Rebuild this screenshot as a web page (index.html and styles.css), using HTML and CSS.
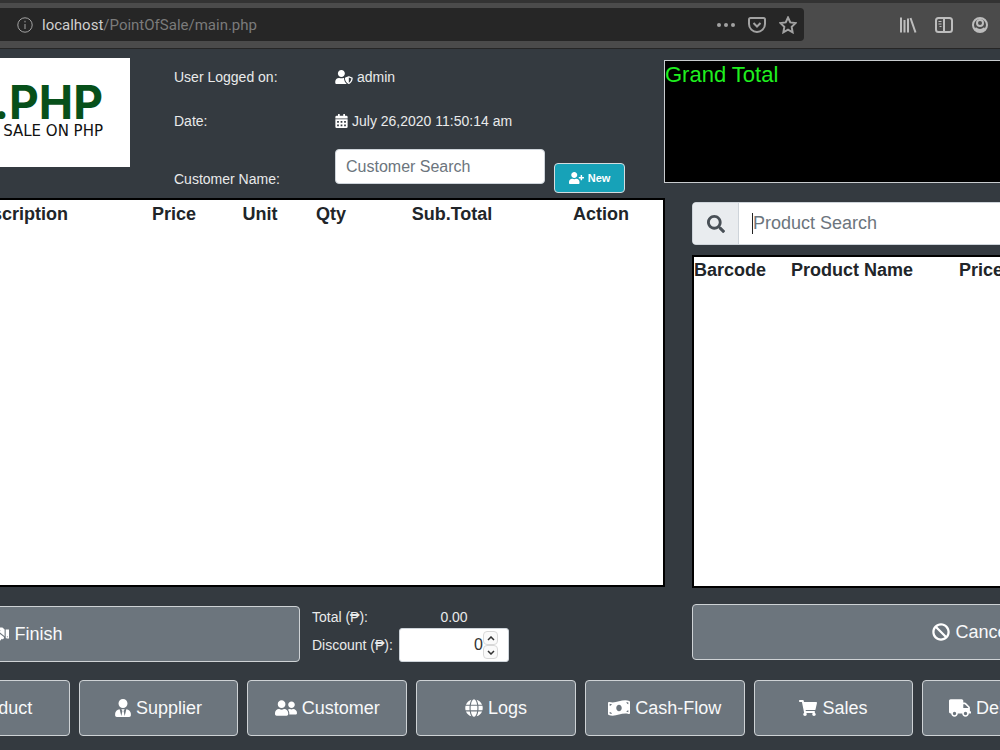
FILE: index.html
```html
<!doctype html>
<html lang="en">
<head>
    <meta charset="UTF-8">
    <meta name="viewport" content="width=device-width, initial-scale=1.0">
    <title>Point of Sale</title>
    <link rel="stylesheet" href="styles.css">
</head>
<body>

<div class="browser">
    <div class="urlbar">
        <svg class="tool" viewBox="0 0 18 18"><circle cx="9" cy="9" r="7.2"/><path d="M9 8v5M9 4.8v1.6"/></svg>
        <div class="url"><b>localhost</b>/PointOfSale/main.php</div>
        <svg class="tool dots" viewBox="0 0 18 18"><circle cx="2" cy="9" r="2"/><circle cx="9" cy="9" r="2"/><circle cx="16" cy="9" r="2"/></svg>
        <svg class="tool" viewBox="0 0 18 18"><path d="M2.5 2h13Q17 2 17 3.500V8a8 8 0 0 1-16 0V3.500Q1 2 2.500 2z"/><path d="M5.500 7L9 10.500 12.500 7"/></svg>
        <svg class="tool" viewBox="0 0 18 18"><path d="M9 1.500l2.300 4.900 5.200.7-3.800 3.700.9 5.500L9 13.700l-4.600 2.600.9-5.500L1.500 7.100l5.200-.7z"/></svg>
    </div>
    <div class="tools">
        <svg class="tool" viewBox="0 0 18 18"><path d="M2 1.500v15M5.500 4v12.500M9 2.500v14M11.500 2l5 14.500"/></svg>
        <svg class="tool" viewBox="0 0 18 18"><rect x="1" y="2" width="16" height="14" rx="2.500"/><path d="M9 2v14"/><path stroke-width="1" d="M3.500 5.500h3M3.500 8h3M4.500 10.500h2"/></svg>
        <svg class="tool" viewBox="0 0 18 18"><circle cx="9" cy="9" r="7"/><circle cx="9" cy="7" r="3"/><path stroke-width="3" d="M4 12.500q5 4 10 0"/></svg>
    </div>
</div>

<div class="page">
    <div class="main">
        <div class="left">
            <div class="header">
                <div class="logo">
                    <strong>POS.PHP</strong>
                    <span>POINT OF SALE ON PHP</span>
                </div>
                <div class="info">
                    <span>User Logged on:</span>
                    <span>
                        <svg class="icon wide" viewBox="0 0 640 512"><path d="M622.3 271.1l-115.2-45c-4.100-1.600-12.600-3.700-22.200 0l-115.200 45c-10.700 4.200-17.700 14-17.700 24.900 0 111.600 68.700 188.800 132.900 213.900 9.600 3.700 18 1.600 22.200 0C558.400 489.900 640 420.500 640 296c0-10.900-7-20.700-17.700-24.900zM496 462.400V273.300l95.500 37.300c-5.600 87.100-60.900 135.400-95.500 151.800zM224 256c70.700 0 128-57.300 128-128S294.700 0 224 0 96 57.300 96 128s57.300 128 128 128zm96 40c0-2.500.8-4.800 1.100-7.200-2.500-.1-4.900-.8-7.500-.8h-16.700c-22.200 10.200-46.900 16-72.900 16s-50.600-5.800-72.900-16h-16.700C60.200 288 0 348.200 0 422.400V464c0 26.500 21.500 48 48 48h352c6.800 0 13.300-1.500 19.200-4-54-42.900-99.200-116.700-99.200-212z"/></svg>
                        admin
                    </span>
                    <span>Date:</span>
                    <span>
                        <svg class="icon narrow" viewBox="0 0 448 512"><path fill-rule="evenodd" d="M0 464q0 48 48 48h352q48 0 48-48V192H0zM64 256h64v64H64zm128 0h64v64h-64zm128 0h64v64h-64zM64 384h64v64H64zm128 0h64v64h-64zm128 0h64v64h-64zM448 160v-48q0-48-48-48h-48V12q0-12-12-12h-40q-12 0-12 12v52H160V12q0-12-12-12h-40Q96 0 96 12v52H48Q0 64 0 112v48z"/></svg>
                        July 26,2020 11:50:14 am
                    </span>
                    <label for="customer">Customer Name:</label>
                    <div class="customer">
                        <input type="text" id="customer" placeholder="Customer Search">
                        <button class="new">
                            <svg class="icon wide" viewBox="0 0 640 512"><path d="M624 208h-64v-64c0-8.800-7.200-16-16-16h-32c-8.800 0-16 7.200-16 16v64h-64c-8.800 0-16 7.200-16 16v32c0 8.800 7.200 16 16 16h64v64c0 8.800 7.200 16 16 16h32c8.800 0 16-7.200 16-16v-64h64c8.800 0 16-7.200 16-16v-32c0-8.800-7.200-16-16-16zm-400 48c70.700 0 128-57.300 128-128S294.700 0 224 0 96 57.300 96 128s57.300 128 128 128zm89.600 32h-16.700c-22.200 10.200-46.900 16-72.900 16s-50.600-5.800-72.900-16h-16.700C60.200 288 0 348.200 0 422.400V464c0 26.500 21.500 48 48 48h352c26.500 0 48-21.500 48-48v-41.600c0-74.200-60.200-134.400-134.400-134.400z"/></svg>
                            New
                        </button>
                    </div>
                </div>
            </div>

            <div class="panel cart">
                <table>
                    <tr>
                        <th>Description</th>
                        <th class="price">Price</th>
                        <th class="unit">Unit</th>
                        <th class="qty">Qty</th>
                        <th class="sub">Sub.Total</th>
                        <th class="action">Action</th>
                    </tr>
                </table>
            </div>

            <div class="checkout">
                <button class="btn finish">
                    <svg class="icon wide" viewBox="0 0 640 512"><path d="M434.700 64h-85.900c-8 0-15.700 3-21.600 8.400l-98.300 90c-.1.1-.2.3-.3.4-16.600 15.600-16.300 40.500-2.100 56 12.700 13.900 39.400 17.600 56.100 2.700.1-.1.3-.1.4-.2l79.900-73.200c6.500-5.900 16.700-5.500 22.600 1 6 6.500 5.500 16.600-1 22.600l-26.100 23.900L504 313.800c2.900 2.400 5.500 5 7.900 7.700V128l-54.600-54.600c-5.900-6-14.100-9.400-22.600-9.400zM544 128.200v223.900c0 17.700 14.300 32 32 32h64V128.200h-96zm48 223.900c-8.800 0-16-7.200-16-16s7.200-16 16-16 16 7.200 16 16-7.200 16-16 16zM0 384h64c17.700 0 32-14.300 32-32V128.200H0V384zm48-63.900c8.800 0 16 7.200 16 16s-7.200 16-16 16-16-7.200-16-16c0-8.900 7.200-16 16-16zm435.900 18.600L334.600 217.500l-30 27.500c-29.700 27.100-75.200 24.500-101.700-4.400-26.900-29.400-24.800-74.900 4.400-101.700L289.100 64h-83.800c-8.500 0-16.600 3.400-22.600 9.400L128 128v223.900h18.300l90.500 81.900c27.400 22.300 67.700 18.100 90-9.300l.2-.2 17.900 15.500c15.900 13 39.400 10.500 52.300-5.400l31.400-38.600 5.400 4.400c13.700 11.100 33.900 9.100 45-4.700l9.500-11.700c11.200-13.800 9.100-33.900-4.600-45.100z"/></svg>
                    Finish
                </button>
                <div class="totals">
                    <span>Total (₱):</span>
                    <span class="amount">0.00</span>
                    <label for="discount">Discount (₱):</label>
                    <div class="discount">
                        <input type="text" inputmode="decimal" id="discount" value="0">
                        <div class="spin">
                            <button aria-label="Increase"><svg viewBox="0 0 8 5"><path d="M1 4l3-3 3 3"/></svg></button>
                            <button aria-label="Decrease"><svg viewBox="0 0 8 5"><path d="M1 1l3 3 3-3"/></svg></button>
                        </div>
                    </div>
                </div>
            </div>
        </div>

        <div class="right">
            <div class="grand">Grand Total</div>
            <div class="products">
                <div class="search">
                    <label for="product" aria-label="Product Search">
                        <svg class="icon" viewBox="0 0 512 512"><path d="M505 442.700L405.300 343c-4.500-4.500-10.600-7-17-7H372c27.600-35.300 44-79.700 44-128C416 93.100 322.900 0 208 0S0 93.100 0 208s93.100 208 208 208c48.300 0 92.700-16.400 128-44v16.300c0 6.400 2.500 12.500 7 17l99.700 99.700c9.400 9.400 24.600 9.400 33.900 0l28.300-28.300c9.400-9.400 9.400-24.600.1-34zM208 336c-70.700 0-128-57.200-128-128 0-70.700 57.200-128 128-128 70.700 0 128 57.200 128 128 0 70.700-57.200 128-128 128z"/></svg>
                    </label>
                    <div class="field">
                        <i class="caret"></i>
                        <input type="text" id="product" placeholder="Product Search">
                    </div>
                </div>
                <div class="panel list">
                    <table>
                        <tr>
                            <th class="barcode">Barcode</th>
                            <th class="name">Product Name</th>
                            <th class="cost">Price</th>
                            <th></th>
                        </tr>
                    </table>
                </div>
                <button class="btn">
                    <svg class="icon" viewBox="0 0 512 512"><path d="M256 8C119 8 8 119 8 256s111 248 248 248 248-111 248-248S393 8 256 8zm130.100 117.900c65.400 65.400 70 165.500 20.700 235.600L150.500 105.200c70.200-49.300 170.200-44.700 235.600 20.700zM125.900 386.100c-65.400-65.400-70-165.500-20.700-235.600l256.300 256.300c-70.200 49.300-170.200 44.700-235.600-20.700z"/></svg>
                    Cancel
                </button>
            </div>
        </div>
    </div>

    <nav class="menu">
        <button class="btn">
            <svg class="icon" viewBox="0 0 512 512"><path d="M240 0v160H8L52 32Q64 0 96 0zM272 0h144q32 0 44 32l44 128H272zM0 192h512v272q0 48-48 48H48q-48 0-48-48z"/></svg>
            Product
        </button>
        <button class="btn">
            <svg class="icon narrow" viewBox="0 0 448 512"><path d="M224 256c70.700 0 128-57.300 128-128S294.700 0 224 0 96 57.300 96 128s57.300 128 128 128zm95.800 32.600L272 480l-32-136 32-56h-96l32 56-32 136-47.800-191.400C56.900 292 0 350.300 0 422.400V464c0 26.500 21.500 48 48 48h352c26.500 0 48-21.500 48-48v-41.600c0-72.100-56.900-130.400-128.200-133.800z"/></svg>
            Supplier
        </button>
        <button class="btn">
            <svg class="icon wide" viewBox="0 0 640 512"><path d="M192 256c61.900 0 112-50.100 112-112S253.900 32 192 32 80 82.100 80 144s50.100 112 112 112zm76.800 32h-8.300c-20.800 10-43.900 16-68.500 16s-47.600-6-68.500-16h-8.300C51.600 288 0 339.600 0 403.200V432c0 26.500 21.500 48 48 48h288c26.500 0 48-21.500 48-48v-28.800c0-63.600-51.600-115.200-115.200-115.200zM480 256c53 0 96-43 96-96s-43-96-96-96-96 43-96 96 43 96 96 96zm48 32h-3.800c-13.900 4.800-28.600 8-44.200 8s-30.300-3.200-44.200-8H432c-20.400 0-39.200 5.900-55.700 15.400 24.400 26.300 39.700 61.200 39.700 99.800v38.400c0 2.200-.5 4.300-.6 6.400H592c26.500 0 48-21.500 48-48 0-61.900-50.100-112-112-112z"/></svg>
            Customer
        </button>
        <button class="btn">
            <svg class="icon" viewBox="0 0 496 512"><path d="M336.500 160C322 70.700 287.800 8 248 8s-74 62.700-88.500 152h177zM152 256c0 22.200 1.200 43.500 3.300 64h185.300c2.100-20.500 3.300-41.800 3.300-64s-1.200-43.500-3.300-64H155.300c-2.100 20.500-3.300 41.800-3.300 64zm324.700-96c-28.600-67.900-86.500-120.400-158-141.600 24.400 33.800 41.200 84.700 50 141.600h108zM177.200 18.400C105.800 39.600 47.800 92.100 19.300 160h108c8.700-56.900 25.500-107.800 49.900-141.600zM487.400 192H372.700c2.100 21 3.300 42.500 3.300 64s-1.200 43-3.300 64h114.600c5.500-20.500 8.600-41.800 8.600-64s-3.100-43.500-8.500-64zM120 256c0-21.500 1.200-43 3.300-64H8.600C3.200 212.500 0 233.800 0 256s3.200 43.500 8.600 64h114.600c-2-21-3.200-42.500-3.200-64zm39.500 96c14.500 89.300 48.700 152 88.500 152s74-62.700 88.500-152h-177zm159.300 141.600c71.400-21.200 129.400-73.700 158-141.600h-108c-8.800 56.900-25.600 107.800-50 141.600zM19.300 352c28.600 67.900 86.500 120.400 158 141.600-24.400-33.800-41.200-84.700-50-141.600h-108z"/></svg>
            Logs
        </button>
        <button class="btn">
            <svg class="icon wide" viewBox="0 0 640 512"><path d="M621.200 54.500C582.400 38.200 543.600 32 504.800 32c-123.200 0-246.400 62.300-369.500 62.300-30.900 0-61.800-3.900-92.700-13.700-3.500-1.100-6.900-1.600-10.300-1.600C15 79 0 92.300 0 110.800v317.300c0 12.600 7.200 24.600 18.800 29.400C57.600 473.800 96.400 480 135.200 480c123.200 0 246.400-62.300 369.600-62.300 30.900 0 61.700 3.900 92.600 13.700 3.500 1.100 7 1.600 10.400 1.600 17.200 0 32.200-13.300 32.200-31.800V83.900c0-12.600-7.200-24.600-18.800-29.400zM48 132.200c20.100 5 41.100 7.600 62.700 8.900C104.800 170.500 79 192.700 48 192.700v-60.500zm0 285v-47.800c34.400 0 62.200 27.300 63.700 61.400-22.500-1.800-43.600-6.300-63.700-13.600zM320 352c-44.200 0-80-43-80-96s35.800-96 80-96 80 43 80 96-35.800 96-80 96zm272 27.800c-17.500-4.400-35.700-6.900-54.300-8.500 5.900-26 27.500-45.800 54.300-49.200v57.700zm0-236.100c-30.900-3.900-54.900-29.700-55.800-61.600 19.500 2.200 38.100 6.300 55.800 12.700v48.900z"/></svg>
            Cash-Flow
        </button>
        <button class="btn">
            <svg class="icon" viewBox="0 0 576 512"><path d="M528.100 301.300l47.300-208C578.800 78.300 567.400 64 552 64H159.200L150 19.200C147.800 8 137.900 0 126.500 0H24C10.700 0 0 10.700 0 24v16c0 13.300 10.700 24 24 24h69.900l70.200 343.400C147.300 417.100 136 435.200 136 456c0 30.900 25.100 56 56 56s56-25.100 56-56c0-15.700-6.400-29.800-16.800-40h209.600C430.400 426.200 424 440.300 424 456c0 30.900 25.100 56 56 56s56-25.100 56-56c0-22.200-12.900-41.300-31.600-50.400l5.500-24.300c3.400-15-8-29.300-23.400-29.300H218.100l-6.500-32h293.100c11.200 0 20.900-7.800 23.400-18.700z"/></svg>
            Sales
        </button>
        <button class="btn">
            <svg class="icon wide" viewBox="0 0 640 512"><path d="M624 352h-16V243.900c0-12.700-5.100-24.900-14.100-33.900L494 110.100c-9-9-21.200-14.100-33.900-14.100H416V48c0-26.500-21.500-48-48-48H48C21.500 0 0 21.500 0 48v320c0 26.500 21.500 48 48 48h16c0 53 43 96 96 96s96-43 96-96h128c0 53 43 96 96 96s96-43 96-96h48c8.800 0 16-7.200 16-16v-32c0-8.800-7.200-16-16-16zM160 464c-26.500 0-48-21.500-48-48s21.500-48 48-48 48 21.500 48 48-21.500 48-48 48zm320 0c-26.500 0-48-21.500-48-48s21.500-48 48-48 48 21.500 48 48-21.500 48-48 48zm80-208H416V144h44.100l99.900 99.900V256z"/></svg>
            Deliveries
        </button>
    </nav>
</div>

</body>
</html>
```
FILE: styles.css
```css
*{
    box-sizing: border-box;
}
body{
    margin: 0;
    min-height: 100vh;
    display: flex;
    flex-direction: column;
    overflow-x: hidden;
    background-color: #343a40;
    color: #e9eaeb;
    font: 14px/20px "Liberation Sans", Arial, sans-serif;
}
button, input{
    font-family: inherit;
    margin: 0;
}
button{
    cursor: pointer;
}

/* browser bar */
.browser{
    display: flex;
    align-items: center;
    height: 49px;
    padding-bottom: 2px;
    border-top: 3px solid #333;
    border-bottom: 1px solid #262626;
    background-color: #4b4b4b;
}
.urlbar{
    flex: 0 1 804px;
    display: flex;
    align-items: center;
    gap: 13px;
    height: 33px;
    padding: 0 7px 0 16px;
    border-radius: 0 4px 4px 0;
    background-color: #262626;
}
.url{
    flex: 1;
    margin-left: -5px;
    color: #7b7b7b;
    font: 15px/20px Roboto, sans-serif;
}
.url b{
    color: #cfcfcf;
    font-weight: normal;
}
.tool{
    width: 18px;
    height: 18px;
    fill: none;
    stroke: #a2a2a2;
    stroke-width: 2;
}
.urlbar .tool:first-child{
    stroke-width: 1;
}
.urlbar .dots{
    fill: #a2a2a2;
    stroke: none;
}
.tools{
    flex: 1;
    display: flex;
    justify-content: flex-end;
    gap: 18px;
    padding-right: 11px;
}
.tools .tool{
    stroke: #bdbdbd;
}

/* page */
.page{
    flex: 1;
    display: flex;
    flex-direction: column;
    gap: 18px;
    padding-bottom: 14px;
    overflow: hidden;
}
.main{
    flex: 1;
    display: grid;
    grid-template-columns: minmax(0, 133fr) minmax(0, 67fr);
}
.left, .right, .products{
    display: flex;
    flex-direction: column;
}
.icon{
    width: 18px;
    height: 18px;
    fill: #fff;
    flex: none;
}
.icon.wide{
    width: 22px;
}
.icon.narrow{
    width: 16px;
}

/* header */
.header{
    display: flex;
    gap: 44px;
    height: 149px;
    padding-top: 9px;
}
.logo{
    width: 130px;
    height: 109px;
    padding: 22px 27px 0 0;
    display: flex;
    flex-direction: column;
    align-items: flex-end;
    overflow: hidden;
    white-space: nowrap;
    background-color: #fff;
    color: #111;
    font: 15px/14px "DejaVu Sans", sans-serif;
}
.logo strong{
    color: #07501a;
    font: bold 46px/44px Inter, sans-serif;
}
.info{
    display: grid;
    grid-template-columns: 161px auto;
    grid-template-rows: 38px 50px 47px;
    align-items: center;
    align-content: start;
}
.info span{
    display: flex;
    align-items: center;
    gap: 4px;
}
.info .icon{
    height: 14px;
    width: 18px;
}
.info .icon.narrow{
    width: 13px;
}
.info label{
    align-self: end;
    margin-bottom: 4px;
}
.customer{
    display: flex;
    align-items: flex-end;
    align-self: end;
    gap: 9px;
}
.customer input{
    width: 210px;
    height: 35px;
    margin-bottom: 9px;
    padding: 0 10px;
    border: 1px solid #ced4da;
    border-radius: 4px;
    font-size: 16px;
}
input::placeholder{
    color: #6c757d;
    opacity: 1;
}
.new{
    display: flex;
    align-items: center;
    justify-content: center;
    gap: 4px;
    width: 71px;
    height: 30px;
    padding: 0;
    border: 1px solid #d5dcdf;
    border-radius: 4px;
    background-color: #17a2b8;
    color: #fff;
    font-size: 11px;
    font-weight: bold;
}
.info .new .icon{
    width: 15px;
    height: 12px;
}

/* tables */
.panel{
    flex: 1;
    min-height: 200px;
    border: 2px solid #000;
    background-color: #fff;
    color: #212529;
}
.panel table{
    width: 100%;
    table-layout: fixed;
    border-collapse: collapse;
}
.panel th{
    padding: 0;
    font-size: 18px;
    line-height: 28px;
}
.list th{
    line-height: 26px;
}
/* the cart runs past the left edge of the window */
.cart{
    margin-left: -90px;
}
.price{
    width: 98px;
}
.unit{
    width: 74px;
}
.qty{
    width: 68px;
}
.sub{
    width: 174px;
}
.action{
    width: 124px;
}
.barcode{
    width: 72px;
}
.name{
    width: 172px;
}
.cost{
    width: 86px;
}

/* buttons */
.btn{
    display: flex;
    align-items: center;
    justify-content: center;
    gap: 5px;
    height: 56px;
    padding: 0;
    border: 1px solid #ced2d5;
    border-radius: 4px;
    background-color: #6c757d;
    color: #f8f9fa;
    font-size: 18px;
}
.checkout{
    display: flex;
    gap: 12px;
    margin-top: 19px;
    margin-left: -250px;
}
.finish{
    width: 550px;
}
.totals{
    display: grid;
    grid-template-columns: 87px 110px;
    grid-template-rows: 22px 34px;
    align-items: center;
    white-space: nowrap;
}
.amount{
    text-align: center;
}
.discount{
    display: flex;
    align-items: center;
    height: 34px;
    padding-right: 10px;
    border: 1px solid #ced4da;
    border-radius: 3px;
    background-color: #fff;
}
.discount input{
    flex: 1;
    min-width: 0;
    padding: 0;
    border: 0;
    outline: none;
    background: none;
    color: #333;
    font-size: 16px;
    text-align: right;
}
.spin{
    display: flex;
    flex-direction: column;
}
.spin button{
    display: flex;
    align-items: center;
    justify-content: center;
    width: 15px;
    height: 14px;
    padding: 0;
    border: 1px solid #d8d8d8;
    border-radius: 4px;
    background-color: #fafafa;
}
.spin svg{
    width: 8px;
    height: 5px;
    fill: none;
    stroke: #333;
    stroke-width: 1.5;
}

/* right side */
.grand{
    height: 123px;
    margin: 11px -252px 19px -1px;
    padding-top: 2px;
    border: 1px solid #c8cbce;
    background-color: #000;
    color: #1ff01f;
    font-size: 22px;
    line-height: 24px;
}
.products{
    flex: 1;
    margin: 0 -252px 2px 27px;
}
.search{
    display: flex;
    height: 43px;
    margin-bottom: 10px;
    border: 1px solid #ced4da;
    border-radius: 4px;
    background-color: #fff;
    overflow: hidden;
}
.search label{
    display: flex;
    align-items: center;
    justify-content: center;
    width: 46px;
    border-right: 1px solid #ced4da;
    background-color: #e9ecef;
}
.search .icon{
    fill: #495057;
}
.field{
    flex: 1;
    display: flex;
    align-items: center;
    padding-left: 13px;
}
.caret{
    width: 1px;
    height: 21px;
    background-color: #222;
}
.field input{
    flex: 1;
    padding: 0;
    border: 0;
    outline: none;
    font-size: 18px;
}
.list{
    margin-bottom: 16px;
}

/* bottom menu */
.menu{
    display: grid;
    grid-template-columns: repeat(7, 1fr);
    gap: 9px;
    margin: 0 -82px 0 -90px;
}
```
